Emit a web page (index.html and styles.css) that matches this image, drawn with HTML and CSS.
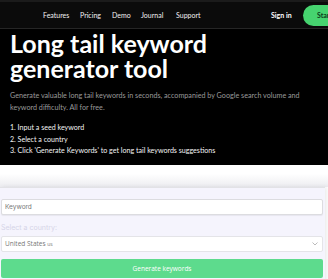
FILE: index.html
```html
<!DOCTYPE html>
<html>
<head>
<meta charset="utf-8">
<link rel="stylesheet" href="styles.css">
</head>
<body>
<div class="hero">
  <nav class="nav">
    <div class="links">
      <a class="l1">Features</a><a class="l2">Pricing</a><a class="l3">Demo</a><a class="l4">Journal</a><a class="l5">Support</a>
    </div>
    <div class="actions">
      <a class="signin">Sign in</a>
      <a class="start">Start free</a>
    </div>
  </nav>
  <div class="content">
    <h1 class="title">Long tail keyword<br>generator tool</h1>
    <p class="lead">Generate valuable long tail keywords in seconds, accompanied by Google search volume and keyword difficulty. All for free.</p>
    <ol class="steps">
      <li>1. Input a seed keyword</li>
      <li>2. Select a country</li>
      <li>3. Click 'Generate Keywords' to get long tail keywords suggestions</li>
    </ol>
  </div>
</div>
<div class="gap"></div>
<div class="card">
  <input class="field" type="text" placeholder="Keyword">
  <label class="label">Select a country:</label>
  <div class="select">
    <span>United States <small>us</small></span>
    <svg class="chev" width="6" height="4" viewBox="0 0 6 4"><path d="M0.5 0.5 L3 3 L5.5 0.5" fill="none" stroke="#aaa" stroke-width="0.8"/></svg>
  </div>
  <button class="btn">Generate keywords</button>
</div>
</body>
</html>
```
FILE: styles.css
```css
* { box-sizing: border-box; }
html, body { margin: 0; padding: 0; }
body { width: 328px; overflow: hidden; background: #fff; font-family: Lato, "Liberation Sans", sans-serif; }
.hero { background: #000; color: #fff; padding-bottom: 8px; }
.nav {
  height: 29px;
  background: #0b0b0b;
  border-top: 2px solid #1b1b1b;
  border-bottom: 1px solid #262626;
  display: flex;
  align-items: center;
  padding-left: 43px;
  white-space: nowrap;
  width: 400px;
}
.links { display: flex; flex-shrink: 0; font-size: 7px; font-weight: 400; }
.links a { color: #f2f2f2; flex-shrink: 0; }
.l1 { width: 37px; }
.l2 { width: 32px; }
.l3 { width: 29px; }
.l4 { width: 35px; }
.l5 { width: 23px; }
.actions { display: flex; flex-shrink: 0; align-items: center; margin-left: 72px; font-size: 7px; font-weight: 700; }
.signin { color: #fff; width: 32px; flex-shrink: 0; }
.start {
  flex-shrink: 0;
  background: #46d36f;
  color: #0b3a1c;
  border-radius: 11px;
  padding: 0 14px;
  height: 21px;
  display: flex; align-items: center;
}
.content { padding: 2px 10px 0 10px; }
.title { margin: 0; font-size: 25px; line-height: 25px; font-weight: 700; letter-spacing: 0; }
.lead { margin: 9px 0 0 0; font-size: 7.2px; line-height: 12px; color: #9a9a9a; }
.steps { list-style: none; margin: 8px 0 0 0; padding: 0; font-size: 7.1px; line-height: 11.5px; color: #f4f4f4; }
.gap { height: 22px; background: linear-gradient(#fff 40%, #ececf0); }
.card {
  background: #f5f4fd;
  width: 325px;
  padding: 11px 2px 4px 1px;
  border-top: 1px solid #e2e2e6;
  box-shadow: 2px 0 4px rgba(0,0,0,0.08);
  display: flex; flex-direction: column;
}
.field {
  height: 16px;
  border: 1px solid #dcdce0;
  border-radius: 2px;
  background: #fff;
  font-family: Inter, sans-serif;
  font-size: 6.5px;
  padding: 0 3px;
  margin: 0;
  box-shadow: 0 1px 1px rgba(0,0,0,0.06);
}
.field::placeholder { color: #777; }
.label { margin: 8px 0 4px 0; font-family: Inter, sans-serif; font-size: 7px; color: #d6d4e8; }
.select {
  height: 16px;
  background: #fff;
  border: 1px solid #e4e4e8;
  border-radius: 2px;
  display: flex; align-items: center; justify-content: space-between;
  padding: 0 4px 0 3px;
  font-family: "Open Sans", sans-serif;
  font-size: 6.5px;
  color: #777;
}
.select small { font-size: 5px; }
.btn {
  margin-top: 7px;
  height: 19px;
  border: none;
  border-radius: 2px;
  background: #5ddb8d;
  color: #fff;
  font-family: "Open Sans", sans-serif;
  font-size: 6.5px;
}
```
